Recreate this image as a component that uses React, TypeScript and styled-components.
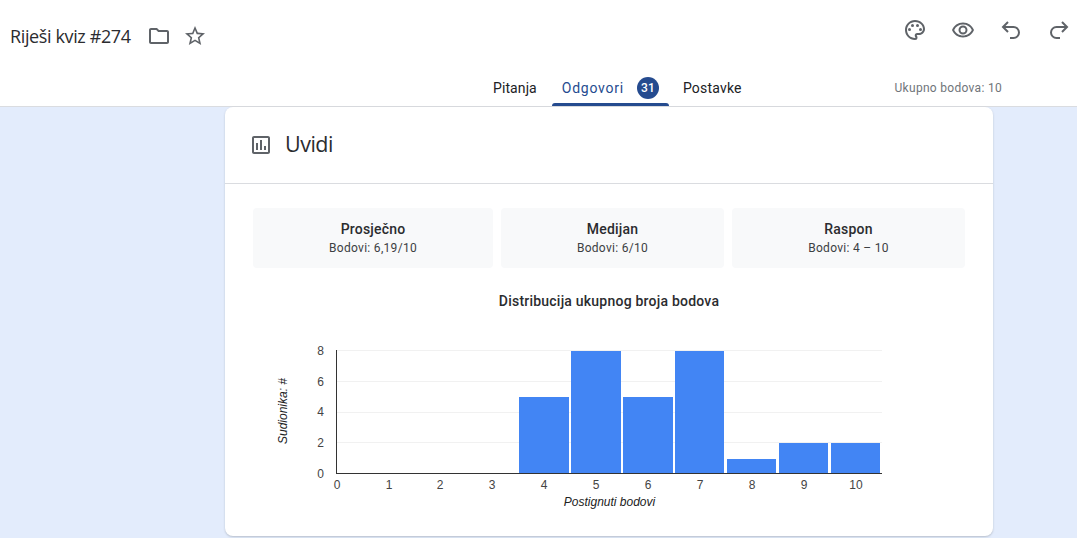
import React from "react";
import styled, { createGlobalStyle } from "styled-components";
import {
  MdOutlineFolder,
  MdStarBorder,
  MdOutlinePalette,
  MdOutlineRemoveRedEye,
  MdOutlineAssessment,
} from "react-icons/md";
import { Undo2, Redo2 } from "lucide-react";

const Global = createGlobalStyle`
  html, body { margin: 0; padding: 0; background: #e3ecfc; }
  body { font-family: Roboto, "Liberation Sans", sans-serif; width: 1077px; height: 538px; overflow: hidden; }
`;

const Page = styled.div`
  display: flex;
  flex-direction: column;
  height: 538px;
`;
const Header = styled.header`
  background: #fff;
  border-bottom: 1px solid #dadce0;
  height: 106px;
  display: flex;
  flex-direction: column;
`;
const TopRow = styled.div`
  height: 72px;
  display: flex;
  justify-content: space-between;
  padding: 0 0 0 10px;
`;
const TitleGroup = styled.div`
  display: flex;
  align-items: center;
`;
const DocTitle = styled.h1`
  margin: 0 10px 0 0;
  font: 400 18px/24px "Open Sans", sans-serif;
  letter-spacing: -0.38px;
  color: #2b2c2f;
`;
const IconSlot = styled.span`
  width: 36px;
  height: 36px;
  display: flex;
  align-items: center;
  justify-content: center;
  color: #5f6368;
`;
const Actions = styled.div`
  display: flex;
  gap: 12px;
  padding-top: 12px;
  align-items: flex-start;
`;
const TabRow = styled.nav`
  height: 34px;
  display: flex;
  align-items: stretch;
  padding: 0 75px 2px 483px;
  box-sizing: border-box;
`;
const Tab = styled.div<{ $active?: boolean; $spacing: number }>`
  position: relative;
  display: flex;
  align-items: center;
  gap: 13px;
  padding: 0 10px;
  margin-right: ${(p) => (p.$active ? 4 : 5)}px;
  font-size: 14px;
  font-weight: 400;
  letter-spacing: ${(p) => p.$spacing}px;
  color: ${(p) => (p.$active ? "#254b8f" : "#202124")};
  ${(p) =>
    p.$active &&
    `&::after {
      content: "";
      position: absolute;
      left: 0;
      right: 0;
      bottom: -2px;
      height: 3px;
      background: #254b8f;
      border-radius: 3px 3px 0 0;
    }`}
`;
const Badge = styled.span`
  width: 22px;
  height: 22px;
  border-radius: 50%;
  background: #254b8f;
  color: #fff;
  font-size: 12px;
  font-weight: 500;
  letter-spacing: 0;
  display: flex;
  align-items: center;
  justify-content: center;
`;
const Total = styled.div`
  margin-left: auto;
  align-self: center;
  font-size: 12px;
  letter-spacing: 0.3px;
  color: #70757a;
`;
const Main = styled.main`
  flex: 1;
  padding: 0 84px 2px 225px;
  display: flex;
`;
const Card = styled.section`
  flex: 1;
  background: #fff;
  border-radius: 8px;
  box-shadow: 0 1px 2px rgba(60, 64, 67, 0.25);
  display: flex;
  flex-direction: column;
`;
const CardHead = styled.div`
  height: 76px;
  border-bottom: 1px solid #dadce0;
  display: flex;
  align-items: center;
  gap: 12px;
  padding-left: 24px;
  color: #5f6368;
`;
const CardTitle = styled.h2`
  margin: -2px 0 0;
  font: 400 21.5px/28px "Open Sans", sans-serif;
  letter-spacing: -0.5px;
  color: #2b2c2f;
`;
const CardBody = styled.div`
  padding: 24px 28px 0;
  display: flex;
  flex-direction: column;
`;
const Stats = styled.div`
  display: grid;
  grid-template-columns: 240px 223px 233px;
  gap: 8px;
`;
const Stat = styled.div`
  height: 60px;
  padding-bottom: 2px;
  box-sizing: border-box;
  background: #f8f9fa;
  border-radius: 4px;
  display: flex;
  flex-direction: column;
  align-items: center;
  justify-content: center;
  color: #2b2c2f;
`;
const StatLabel = styled.div`
  font-size: 14px;
  font-weight: 500;
  line-height: 20px;
  letter-spacing: 0.2px;
`;
const StatValue = styled.div`
  margin-top: 1px;
  font-size: 12px;
  line-height: 16px;
  letter-spacing: 0.3px;
  color: #3c4043;
`;
const ChartTitle = styled.h3`
  margin: 24px 0 0;
  text-align: center;
  font-size: 14px;
  font-weight: 500;
  line-height: 18px;
  letter-spacing: 0.22px;
  color: #2b2c2f;
`;
const ChartSvg = styled.svg`
  display: block;
  width: 712px;
  height: 226px;
  flex: none;
`;
const Tick = styled.text`
  font: 12px "Liberation Sans", Arial, sans-serif;
  fill: #444;
`;
const AxisLabel = styled.text`
  font: italic 12px "Liberation Sans", Arial, sans-serif;
  fill: #222;
`;

// Chart coordinates are given in page pixels, offset by the svg's origin.
const OX = 253;
const OY = 310;
const bars = [
  { x: 519, w: 50, top: 397 },
  { x: 571, w: 50, top: 351 },
  { x: 623, w: 50, top: 397 },
  { x: 675, w: 49, top: 351 },
  { x: 727, w: 49, top: 459 },
  { x: 779, w: 49, top: 443 },
  { x: 831, w: 49, top: 443 },
];
const xTicks = [
  [337, "0"], [389, "1"], [440, "2"], [492, "3"], [544, "4"], [596, "5"],
  [648, "6"], [700, "7"], [752, "8"], [804, "9"], [856, "10"],
] as const;
const yTicks = [
  [355, "8"], [386, "6"], [416, "4"], [447, "2"], [478, "0"],
] as const;
const grid = [350.5, 381.5, 412.5, 442.5];

const Chart = () => (
  <ChartSvg viewBox={`${OX} ${OY} 712 226`}>
    {grid.map((y) => (
      <line key={y} x1={336} x2={882} y1={y} y2={y} stroke="#f1f1f1" />
    ))}
    {bars.map((b) => (
      <rect key={b.x} x={b.x} y={b.top} width={b.w} height={473 - b.top} fill="#4285f4" />
    ))}
    <line x1={336.5} x2={336.5} y1={350} y2={473} stroke="#333" />
    <line x1={336} x2={882} y1={473.5} y2={473.5} stroke="#333" />
    {yTicks.map(([y, t]) => (
      <Tick key={t} x={324} y={y} textAnchor="end">{t}</Tick>
    ))}
    {xTicks.map(([x, t]) => (
      <Tick key={t} x={x} y={489} textAnchor="middle">{t}</Tick>
    ))}
    <AxisLabel x={609.5} y={506} textAnchor="middle">Postignuti bodovi</AxisLabel>
    <AxisLabel transform="translate(286.5 411) rotate(-90)" textAnchor="middle">Sudionika: #</AxisLabel>
  </ChartSvg>
);

export default function App() {
  return (
    <Page>
      <Global />
      <Header>
        <TopRow>
          <TitleGroup>
            <DocTitle>Riješi kviz #274</DocTitle>
            <IconSlot><MdOutlineFolder size={24} /></IconSlot>
            <IconSlot><MdStarBorder size={24} /></IconSlot>
          </TitleGroup>
          <Actions>
            <IconSlot><MdOutlinePalette size={24} /></IconSlot>
            <IconSlot><MdOutlineRemoveRedEye size={24} /></IconSlot>
            <IconSlot><Undo2 size={24} strokeWidth={2} strokeLinecap="butt" strokeLinejoin="miter" /></IconSlot>
            <IconSlot><Redo2 size={24} strokeWidth={2} strokeLinecap="butt" strokeLinejoin="miter" /></IconSlot>
          </Actions>
        </TopRow>
        <TabRow>
          <Tab $spacing={0.1}>Pitanja</Tab>
          <Tab $active $spacing={0.75}>Odgovori<Badge>31</Badge></Tab>
          <Tab $spacing={0.2}>Postavke</Tab>
          <Total>Ukupno bodova: 10</Total>
        </TabRow>
      </Header>
      <Main>
        <Card>
          <CardHead>
            <MdOutlineAssessment size={24} />
            <CardTitle>Uvidi</CardTitle>
          </CardHead>
          <CardBody>
            <Stats>
              <Stat><StatLabel>Prosječno</StatLabel><StatValue>Bodovi: 6,19/10</StatValue></Stat>
              <Stat><StatLabel>Medijan</StatLabel><StatValue>Bodovi: 6/10</StatValue></Stat>
              <Stat><StatLabel>Raspon</StatLabel><StatValue>Bodovi: 4 – 10</StatValue></Stat>
            </Stats>
            <ChartTitle>Distribucija ukupnog broja bodova</ChartTitle>
            <Chart />
          </CardBody>
        </Card>
      </Main>
    </Page>
  );
}
